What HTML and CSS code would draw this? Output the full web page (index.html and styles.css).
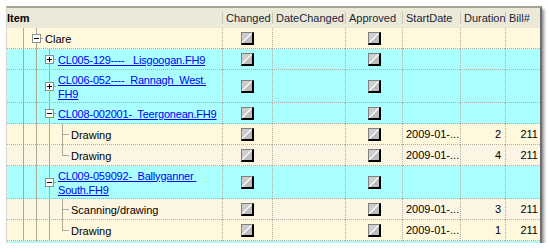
FILE: index.html
```html
<!DOCTYPE html>
<html lang="en">
<head>
  <meta charset="UTF-8">
  <title>Drawing Register</title>
  <link rel="stylesheet" href="styles.css">
</head>
<body>

  <div class="grid">
    <table>
      <thead>
        <tr>
          <th class="col-item">Item</th>
          <th class="col-changed">Changed</th>
          <th class="col-datechanged">DateChanged</th>
          <th class="col-approved">Approved</th>
          <th class="col-start">StartDate</th>
          <th class="col-duration">Duration</th>
          <th class="col-bill">Bill#</th>
        </tr>
      </thead>
      <tbody>
        <!-- County -->
        <tr class="row-a">
          <td class="item"><div class="node"><span class="g pipe"></span><span class="g tee"><span class="box minus"></span></span><span class="label">Clare</span></div></td>
          <td class="c"><span class="check"></span></td><td></td><td class="c"><span class="check"></span></td><td></td><td></td><td></td>
        </tr>

        <!-- Files -->
        <tr class="row-file">
          <td class="item"><div class="node"><span class="g pipe"></span><span class="g pipe"></span><span class="g tee"><span class="box plus"></span></span><a class="label" href="#">CL005-129----   Lisgoogan.FH9</a></div></td>
          <td class="c"><span class="check"></span></td><td></td><td class="c"><span class="check"></span></td><td></td><td></td><td></td>
        </tr>
        <tr class="row-file tall">
          <td class="item"><div class="node"><span class="g pipe"></span><span class="g pipe"></span><span class="g tee"><span class="box plus"></span></span><a class="label" href="#">CL006-052----  Rannagh  West.<wbr>FH9</a></div></td>
          <td class="c"><span class="check"></span></td><td></td><td class="c"><span class="check"></span></td><td></td><td></td><td></td>
        </tr>
        <tr class="row-file">
          <td class="item"><div class="node"><span class="g pipe"></span><span class="g pipe"></span><span class="g tee"><span class="box minus"></span></span><a class="label" href="#">CL008-002001-  Teergonean.FH9</a></div></td>
          <td class="c"><span class="check"></span></td><td></td><td class="c"><span class="check"></span></td><td></td><td></td><td></td>
        </tr>
        <tr class="row-a">
          <td class="item"><div class="node"><span class="g pipe"></span><span class="g pipe"></span><span class="g pipe"></span><span class="g tee"></span><span class="label">Drawing</span></div></td>
          <td class="c"><span class="check"></span></td><td></td><td class="c"><span class="check"></span></td><td class="date">2009-01-...</td><td class="num">2</td><td class="bill">211</td>
        </tr>
        <tr class="row-b">
          <td class="item"><div class="node"><span class="g pipe"></span><span class="g pipe"></span><span class="g pipe"></span><span class="g ell"></span><span class="label">Drawing</span></div></td>
          <td class="c"><span class="check"></span></td><td></td><td class="c"><span class="check"></span></td><td class="date">2009-01-...</td><td class="num">4</td><td class="bill">211</td>
        </tr>
        <tr class="row-file tall">
          <td class="item"><div class="node"><span class="g pipe"></span><span class="g pipe"></span><span class="g tee"><span class="box minus"></span></span><a class="label" href="#">CL009-059092-  Ballyganner South.FH9</a></div></td>
          <td class="c"><span class="check"></span></td><td></td><td class="c"><span class="check"></span></td><td></td><td></td><td></td>
        </tr>
        <tr class="row-b">
          <td class="item"><div class="node"><span class="g pipe"></span><span class="g pipe"></span><span class="g pipe"></span><span class="g tee"></span><span class="label">Scanning/drawing</span></div></td>
          <td class="c"><span class="check"></span></td><td></td><td class="c"><span class="check"></span></td><td class="date">2009-01-...</td><td class="num">3</td><td class="bill">211</td>
        </tr>
        <tr class="row-a">
          <td class="item"><div class="node"><span class="g pipe"></span><span class="g pipe"></span><span class="g pipe"></span><span class="g ell"></span><span class="label">Drawing</span></div></td>
          <td class="c"><span class="check"></span></td><td></td><td class="c"><span class="check"></span></td><td class="date">2009-01-...</td><td class="num">1</td><td class="bill">211</td>
        </tr>
      </tbody>
    </table>
  </div>

</body>
</html>
```
FILE: styles.css
```css
/* General Reset */
* {
  margin: 0;
  padding: 0;
  box-sizing: border-box;
}

body {
  font-family: "Liberation Sans", Arial, sans-serif;
  font-size: 11px;
  background-color: #fff;
  color: #000;
}

/* Grid frame */
.grid {
  width: 536px;
  margin: 6px 0 0 6px;
  padding-bottom: 2px;
  background: #aaffff;
  border-top: 2px solid #a6a397;
  border-left: 1px solid #dcdad0;
  border-right: 2px solid #6e6e6e;
  box-shadow: 2px 3px 3px rgba(0, 0, 0, 0.45);
}

table {
  width: 533px;
  table-layout: fixed;
  border-collapse: separate;
  border-spacing: 0;
}

/* Header */
th {
  height: 20px;
  padding-left: 4px;
  text-align: left;
  font-weight: normal;
  color: #24243a;
  white-space: nowrap;
  overflow: hidden;
  background: #ece9d8 linear-gradient(#c9c6b6, #c9c6b6) 0 4px / 1px 12px no-repeat;
}

th.col-item {
  padding-left: 0;
  font-weight: bold;
  color: #000;
  background-image: none;
}

.col-item { width: 215px; }
.col-changed { width: 50px; }
.col-datechanged { width: 73px; }
.col-approved { width: 57px; }
.col-start { width: 58px; }
.col-duration { width: 45px; }
.col-bill { width: 35px; }

/* Body cells */
td {
  height: 21px;
  line-height: 20px;
  white-space: nowrap;
  overflow: hidden;
  border-bottom: 1px dotted #b4aca2;
}

td + td {
  border-left: 1px dotted #b4aca2;
}

.row-a td { background-color: #fff8dc; }
.row-b td { background-color: #fdf5e4; }
.row-file td { background-color: #aaffff; }

.tall td { height: 33px; }

td.c { vertical-align: middle; }
td.date { padding-left: 3px; }
td.num { text-align: right; padding-right: 4px; }
td.bill { text-align: right; padding-right: 2px; }

/* Tree column: the dotted rule is painted so the guide lines run through it */
td.item {
  border-bottom: 0;
  line-height: normal;
  vertical-align: top;
  background-image: repeating-linear-gradient(to right, #b4aca2 0 1px, transparent 1px 2px);
  background-size: 100% 1px;
  background-position: left bottom;
  background-repeat: no-repeat;
}

.node {
  display: flex;
  height: 21px;
  padding-left: 10px;
}

.tall .node { height: 33px; }

.g {
  flex: none;
  width: 13px;
  display: flex;
  align-items: center;
  justify-content: center;
}

.pipe {
  background: linear-gradient(#aca899, #aca899) 6px 0 / 1px 100% no-repeat;
}

.tee {
  background:
    linear-gradient(#aca899, #aca899) 6px 0 / 1px 100% no-repeat,
    linear-gradient(#aca899, #aca899) 6px 10px / 7px 1px no-repeat;
}

.ell {
  background:
    linear-gradient(#aca899, #aca899) 6px 0 / 1px 11px no-repeat,
    linear-gradient(#aca899, #aca899) 6px 10px / 7px 1px no-repeat;
}

.tall .tee {
  background:
    linear-gradient(#aca899, #aca899) 6px 0 / 1px 100% no-repeat,
    linear-gradient(#aca899, #aca899) 6px 16px / 7px 1px no-repeat;
}

/* Expand / collapse buttons */
.box {
  width: 9px;
  height: 9px;
  border: 1px solid #8e8e8e;
}

.minus {
  background: #fff linear-gradient(#000, #000) center / 5px 1px no-repeat;
}

.plus {
  background:
    linear-gradient(#000, #000) center / 5px 1px no-repeat,
    linear-gradient(#000, #000) center / 1px 5px no-repeat,
    #fff;
}

.label {
  align-self: center;
  min-width: 0;
  margin-left: 2px;
  line-height: 14px;
  white-space: pre-wrap;
  color: #000;
}

a.label {
  color: #0000ff;
  text-decoration: underline;
  letter-spacing: -0.2px;
}

/* Greyed-out check boxes */
.check {
  display: block;
  width: 13px;
  height: 13px;
  margin: 0 auto;
  border: 1px solid #808080;
  border-right: 2px solid #000;
  border-bottom: 2px solid #000;
  background: linear-gradient(to bottom right, #cdcdcd 0 42%, #fff 50%, #bdbdbd 58% 100%);
}
```
